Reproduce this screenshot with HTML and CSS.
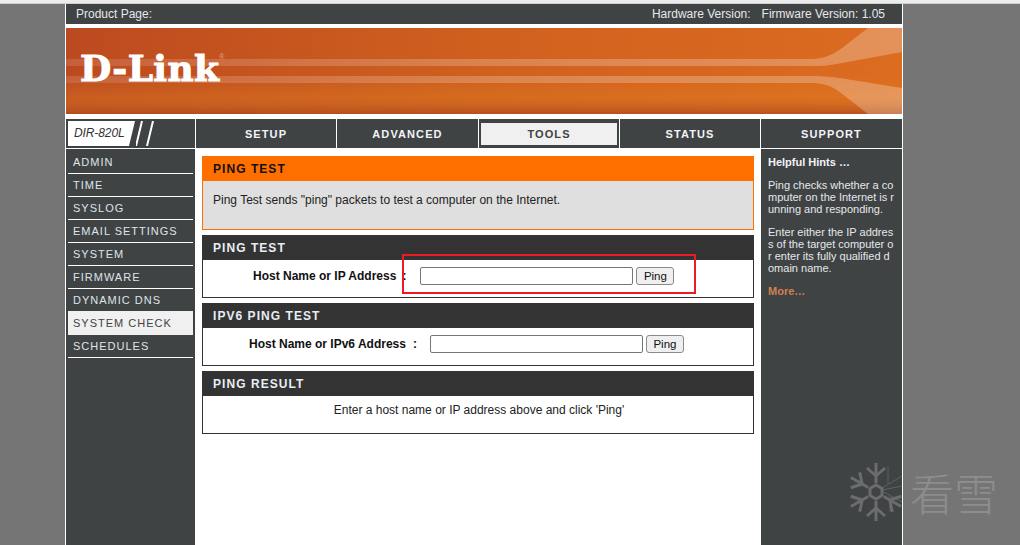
FILE: index.html
```html
<!DOCTYPE html>
<html lang="en">
<head>
<meta charset="utf-8">
<title>D-Link DIR-820L</title>
<link rel="stylesheet" href="styles.css">
</head>
<body>
<div class="strip"></div>
<div class="page">
  <header class="topbar">
    <span>Product Page:</span>
    <span class="versions"><span>Hardware Version:</span><span>Firmware Version: 1.05</span></span>
  </header>
  <div class="banner">
    <svg class="banner-art" viewBox="0 0 836 86" width="836" height="86" aria-hidden="true">
      <defs>
        <linearGradient id="bg" x1="0" y1="0" x2="1" y2="0">
          <stop offset="0" stop-color="#bc4a20"/>
          <stop offset=".5" stop-color="#d0601e"/>
          <stop offset="1" stop-color="#dc6c20"/>
        </linearGradient>
        <linearGradient id="shade" x1="0" y1="0" x2="0" y2="1">
          <stop offset=".55" stop-color="#e08020" stop-opacity="0"/>
          <stop offset=".8" stop-color="#e08020" stop-opacity=".35"/>
          <stop offset="1" stop-color="#b04a20" stop-opacity=".8"/>
        </linearGradient>
        <linearGradient id="ray" x1="0" y1="0" x2="1" y2="0">
          <stop offset="0" stop-color="#fff" stop-opacity=".12"/>
          <stop offset=".5" stop-color="#fff" stop-opacity=".22"/>
          <stop offset="1" stop-color="#fff" stop-opacity=".26"/>
        </linearGradient>
      </defs>
      <rect width="836" height="86" fill="url(#bg)"/>
      <rect width="836" height="86" fill="url(#shade)"/>
      <path fill="url(#ray)" d="M0 31H745C760 31 770 25 780 17L802 0H836V24L776 35C760 38 755 38 745 38H0Z"/>
      <path fill="url(#ray)" d="M0 48H745C770 48 790 53 836 60V86H802L775 65C765 57 755 55 745 55H0Z"/>
    </svg>
    <div class="logo">D-Link<sup class="reg">®</sup></div>
  </div>
  <nav class="tabs">
    <div class="tab model">
      <span class="model-name">DIR-820L</span>
      <svg class="slashes" width="24" height="25" viewBox="0 0 24 25" aria-hidden="true">
        <path d="M6 0 0 25M17 0 11 25" stroke="#fff" stroke-width="2" fill="none"/>
      </svg>
    </div>
    <div class="tab w140">SETUP</div>
    <div class="tab w141">ADVANCED</div>
    <div class="tab w140 current"><span>TOOLS</span></div>
    <div class="tab w140">STATUS</div>
    <div class="tab w141">SUPPORT</div>
  </nav>
  <div class="main">
    <aside class="side">
      <a class="side-item">ADMIN</a>
      <a class="side-item">TIME</a>
      <a class="side-item">SYSLOG</a>
      <a class="side-item">EMAIL SETTINGS</a>
      <a class="side-item">SYSTEM</a>
      <a class="side-item">FIRMWARE</a>
      <a class="side-item">DYNAMIC DNS</a>
      <a class="side-item active">SYSTEM CHECK</a>
      <a class="side-item">SCHEDULES</a>
    </aside>
    <main class="content">
      <section class="intro">
        <h2 class="intro-head">PING TEST</h2>
        <p class="intro-body">Ping Test sends "ping" packets to test a computer on the Internet.</p>
      </section>
      <section class="box">
        <h2 class="box-head">PING TEST</h2>
        <div class="box-body row-ipv4">
          <label class="field-label">Host Name or IP Address</label>
          <span class="colon">:</span>
          <input class="field" type="text">
          <button class="btn" type="button">Ping</button>
        </div>
      </section>
      <section class="box">
        <h2 class="box-head">IPV6 PING TEST</h2>
        <div class="box-body row-ipv6">
          <label class="field-label">Host Name or IPv6 Address</label>
          <span class="colon">:</span>
          <input class="field" type="text">
          <button class="btn" type="button">Ping</button>
        </div>
      </section>
      <section class="box">
        <h2 class="box-head">PING RESULT</h2>
        <div class="box-body result">Enter a host name or IP address above and click 'Ping'</div>
      </section>
    </main>
    <aside class="hints">
      <p class="hints-title">Helpful Hints …</p>
      <p>Ping checks whether a computer on the Internet is running and responding.</p>
      <p>Enter either the IP address of the target computer or enter its fully qualified domain name.</p>
      <p class="more">More…</p>
    </aside>
  </div>
</div>
<div class="redbox"></div>
<div class="watermark">
  <svg class="flake" width="56" height="62" viewBox="-28 -31 56 62" aria-hidden="true">
    <defs>
      <g id="arm"><path d="M0-9V-29M0-16-9-24M0-16 9-24" fill="none" stroke-width="3"/></g>
    </defs>
    <g stroke="#6b6d6d">
      <use href="#arm"/>
      <use href="#arm" transform="rotate(120)"/>
      <use href="#arm" transform="rotate(180)"/>
      <use href="#arm" transform="rotate(240)"/>
      <use href="#arm" transform="rotate(300)"/>
      <path d="M-6-3.5 0-7 6-3.5V3.500L0 7-6 3.500Z" fill="none" stroke-width="3"/>
      <path d="M6-4 26-16M6-2 26-6M12-8V-26M8 0 26 10M14 4V20" fill="none" stroke-width=".7"/>
    </g>
  </svg>
  <span class="wm-text">看雪</span>
</div>
</body>
</html>
```

FILE: styles.css
```css
html, body {
  margin: 0;
  height: 100%;
  overflow: hidden;
}
body {
  background: #757575;
  font-family: "Liberation Sans", Arial, sans-serif;
  font-size: 12px;
  color: #111;
}
.strip {
  height: 3px;
  background: #ececec;
  border-bottom: 1px solid #cfcfcf;
}
.page {
  box-sizing: content-box;
  width: 836px;
  height: 541px;
  margin-left: 65px;
  background: #fff;
  border-left: 1px solid #fff;
  border-right: 1px solid #fff;
}
.topbar {
  height: 20px;
  padding: 0 17px 0 10px;
  background: #404344;
  color: #e4e8ec;
  display: flex;
  justify-content: space-between;
  align-items: center;
  line-height: 20px;
}
.versions {
  display: flex;
  gap: 11px;
}
.banner {
  position: relative;
  height: 86px;
  margin-top: 4px;
  overflow: hidden;
}
.banner-art {
  display: block;
}
.logo {
  position: absolute;
  left: 14px;
  top: 18px;
  font-family: "DejaVu Serif", serif;
  font-weight: bold;
  font-size: 36px;
  line-height: 44px;
  color: #fff;
  letter-spacing: .4px;
  -webkit-text-stroke: 1px #fff;
}
.reg {
  font-family: "Liberation Sans", sans-serif;
  font-weight: normal;
  font-size: 7px;
  line-height: 0;
  color: #e5a688;
  vertical-align: 22px;
  margin-left: 0;
  -webkit-text-stroke: 0;
}
.tabs {
  display: flex;
  gap: 1px;
  margin-top: 5px;
  height: 29px;
}
.tab {
  box-sizing: border-box;
  background: #404344;
  color: #f2f4f8;
  font-weight: bold;
  font-size: 11px;
  letter-spacing: 1.1px;
  display: flex;
  align-items: center;
  justify-content: center;
}
.w140 { width: 140px; }
.w141 { width: 141px; }
.tab.model {
  width: 129px;
  justify-content: flex-start;
  padding-left: 2px;
}
.model-name {
  box-sizing: border-box;
  width: 67px;
  height: 25px;
  line-height: 25px;
  padding-left: 6px;
  background: #fff;
  color: #333;
  font-weight: normal;
  font-style: italic;
  font-size: 12px;
  letter-spacing: -.1px;
  clip-path: polygon(0 0, 100% 0, 91% 100%, 0 100%);
}
.slashes {
  display: block;
  margin-left: 1px;
}
.tab.current {
  padding: 4px 2px 3px;
}
.tab.current span {
  flex: 1;
  align-self: stretch;
  background: #f0f0f0;
  color: #404344;
  text-align: center;
  line-height: 22px;
}
.main {
  display: flex;
  gap: 1px;
  margin-top: 1px;
  height: 396px;
}
.side {
  box-sizing: border-box;
  width: 129px;
  padding: 2px 2px 0;
  background: #404344;
}
.side-item {
  display: block;
  box-sizing: border-box;
  height: 23px;
  line-height: 22px;
  padding-left: 5px;
  border-bottom: 1px solid #fff;
  color: #dfe4ea;
  font-size: 11px;
  letter-spacing: 1px;
}
.side-item.active {
  background: #f0f0f0;
  border-bottom-color: #f0f0f0;
  box-shadow: 0 -1px #f0f0f0;
  color: #404344;
}
.content {
  box-sizing: border-box;
  width: 564px;
  padding: 7px 6px 0;
  background: #fff;
}
.intro-head, .box-head {
  margin: 0;
  height: 25px;
  line-height: 26px;
  padding-left: 11px;
  font-size: 12px;
  font-weight: bold;
  letter-spacing: 1.05px;
}
.intro-head {
  background: #ff6f00;
  color: #111;
}
.intro-body {
  box-sizing: border-box;
  height: 49px;
  margin: 0;
  padding: 11px 10px 0;
  line-height: 17px;
  background: #dfdfdf;
  border: 1px solid #ff6f00;
  border-top: 0;
  color: #222;
}
.box {
  margin-top: 5px;
}
.box-head {
  background: #333;
  color: #e8edf4;
}
.box-body {
  box-sizing: border-box;
  height: 38px;
  border: 1px solid #333;
  border-top: 0;
  background: #fff;
}
.row-ipv4, .row-ipv6 {
  display: flex;
  align-items: flex-start;
  padding-top: 7px;
}
.row-ipv4 { padding-left: 50px; }
.row-ipv6 { padding-left: 46px; }
.field-label {
  font-weight: bold;
  line-height: 16px;
  margin-top: 1px;
}
.colon {
  font-weight: bold;
  line-height: 16px;
  margin: 1px 14px 0 6px;
}
.row-ipv6 .colon {
  margin-left: 7px;
  margin-right: 13px;
}
.field {
  box-sizing: border-box;
  width: 213px;
  height: 18px;
  margin: 0;
  padding: 0 2px;
  border: 1px solid #767676;
  border-radius: 2px;
  background: #fff;
}
.btn {
  box-sizing: border-box;
  width: 38px;
  height: 18px;
  margin: 0 0 0 3px;
  padding: 0;
  border: 1px solid #8a8a8a;
  border-radius: 3px;
  background: #efefef;
  color: #111;
  font-family: "Liberation Sans", Arial, sans-serif;
  font-size: 11.5px;
}
.result {
  text-align: center;
  padding: 6px 0 0 2px;
  line-height: 16px;
  color: #222;
}
.hints {
  box-sizing: border-box;
  width: 141px;
  padding: 7px 8px 0 7px;
  background: #404344;
  color: #e4e8ec;
  font-size: 11px;
  line-height: 12px;
  word-break: break-all;
}
.hints p {
  margin: 0 0 11px;
}
.hints .hints-title {
  font-weight: bold;
  color: #f2f4f6;
}
.hints .more {
  font-weight: bold;
  color: #d08050;
}
.redbox {
  position: absolute;
  left: 402px;
  top: 254px;
  width: 290px;
  height: 36px;
  border: 2px solid #ed1c24;
}
.watermark {
  position: absolute;
  left: 848px;
  top: 461px;
  display: flex;
  align-items: center;
}
.flake {
  display: block;
}
.wm-text {
  margin-left: 6px;
  font-family: "Noto Sans CJK SC", sans-serif;
  font-weight: 300;
  font-size: 44px;
  line-height: 60px;
  letter-spacing: 0;
  color: #8d8d8d;
}
```
